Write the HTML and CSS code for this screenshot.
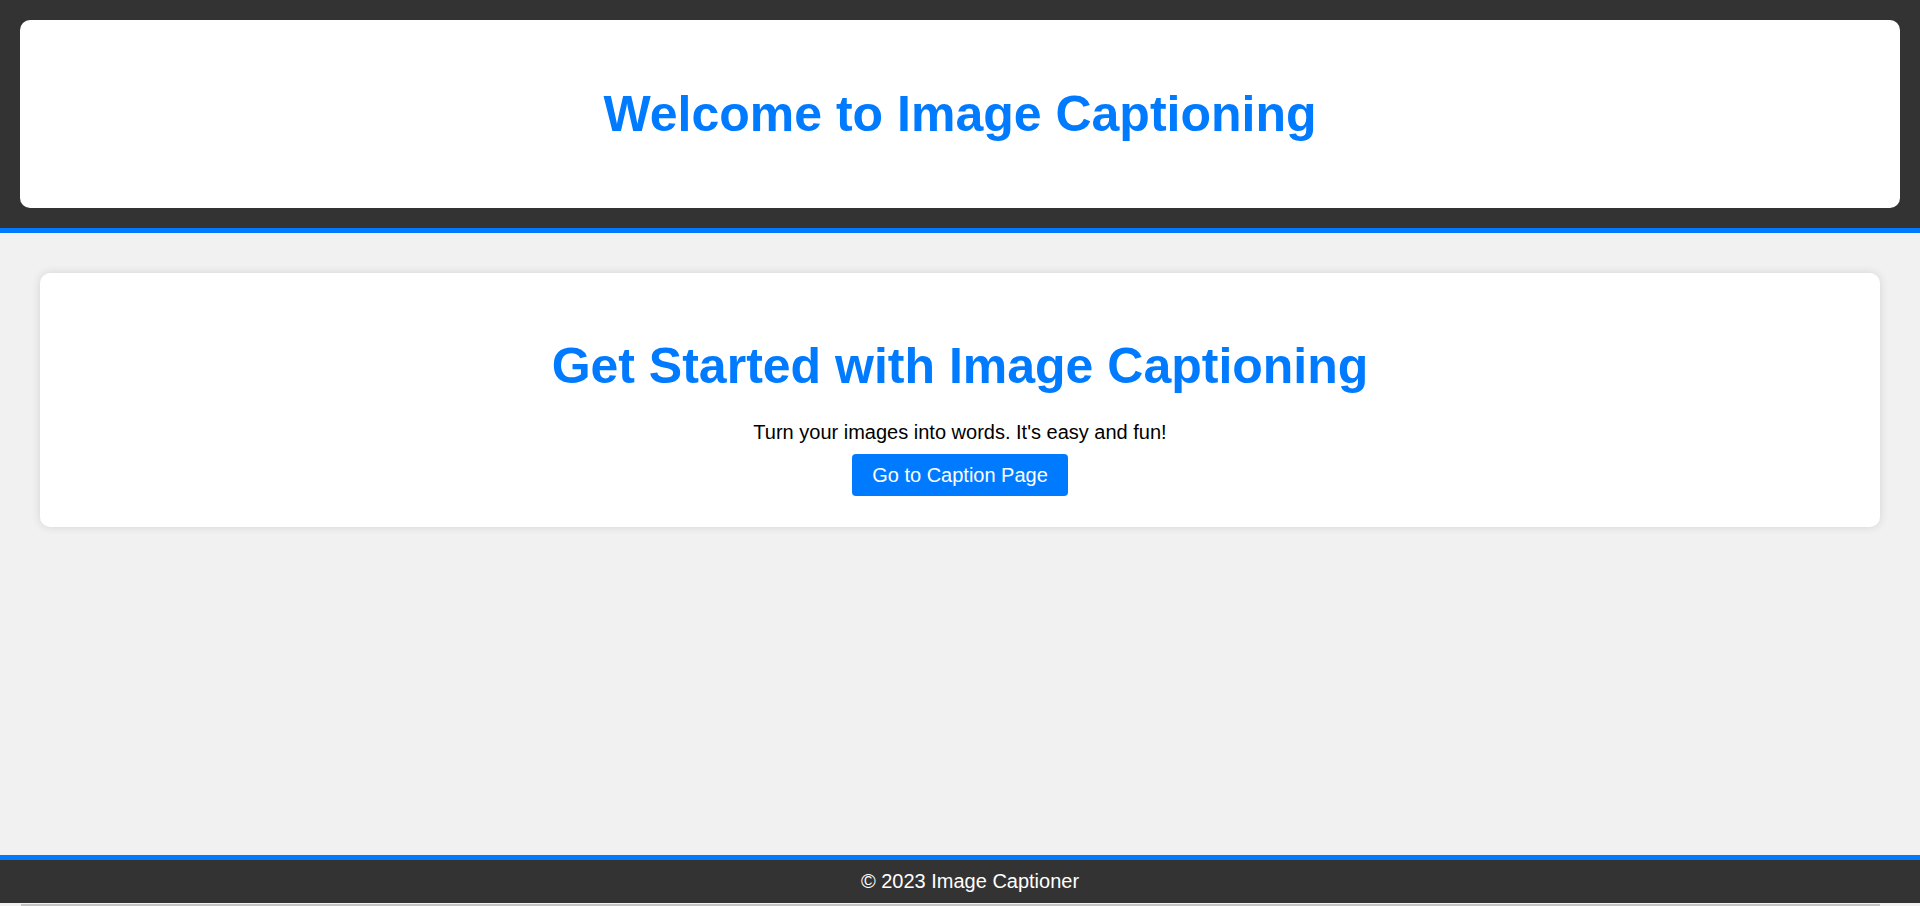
FILE: index.html
```html
<!DOCTYPE html>
<html lang="en">
<head>
<meta charset="utf-8">
<title>Image Captioning</title>
<link rel="stylesheet" href="styles.css">
</head>
<body>
<header class="site-header">
  <div class="header-box">
    <h1 class="title">Welcome to Image Captioning</h1>
  </div>
</header>
<main class="main">
  <section class="card">
    <h1 class="card-title">Get Started with Image Captioning</h1>
    <p class="card-text">Turn your images into words. It's easy and fun!</p>
    <a class="btn" href="#">Go to Caption Page</a>
  </section>
</main>
<footer class="site-footer">© 2023 Image Captioner</footer>
<div class="bottom-strip"><div class="bottom-line"></div></div>
</body>
</html>
```

FILE: styles.css
```css
* { box-sizing: border-box; }

html, body {
  margin: 0;
  padding: 0;
}

body {
  font-family: "Liberation Sans", Arial, sans-serif;
  background: #f1f1f1;
  color: #000;
  height: 906px;
  display: flex;
  flex-direction: column;
  overflow: hidden;
}

.site-header {
  background: #333;
  padding: 20px;
  border-bottom: 5px solid #007bff;
}

.header-box {
  background: #fff;
  border-radius: 10px;
  padding: 65px 20px;
  text-align: center;
}

.title,
.card-title {
  margin: 0;
  font-size: 50px;
  line-height: 58px;
  font-weight: bold;
  color: #007bff;
}

.main {
  flex: 1;
  padding: 40px;
}

.card {
  background: #fff;
  border-radius: 10px;
  box-shadow: 0 0 10px rgba(0, 0, 0, 0.12);
  padding: 30px;
  text-align: center;
  height: 254px;
}

.card-title {
  margin: 34px 0 26px;
}

.card-text {
  margin: 0 0 10px;
  font-size: 20px;
  line-height: 23px;
}

.btn {
  display: inline-block;
  background: #007bff;
  color: #fff;
  text-decoration: none;
  font-size: 20px;
  line-height: 22px;
  padding: 10px 20px;
  border-radius: 4px;
}

.site-footer {
  background: #333;
  color: #fff;
  border-top: 5px solid #007bff;
  text-align: center;
  font-size: 20px;
  line-height: 23px;
  padding: 10px 0 10px 20px;
}

.bottom-strip {
  height: 3px;
  padding-top: 1px;
  background: #f1f1f1;
}

.bottom-line {
  margin-left: 21px;
  width: 1859px;
  height: 2px;
  background: #c4c4c4;
}
```
